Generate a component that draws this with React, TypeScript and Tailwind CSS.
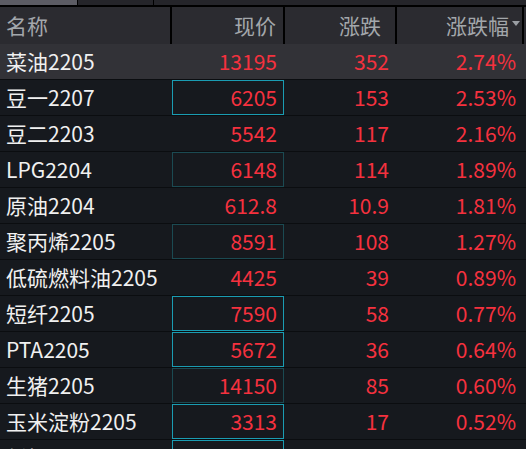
type Row = {
  name: string;
  price: string;
  change: string;
  pct: string;
  box?: "on" | "dim";
};

const ROWS: Row[] = [
  { name: "菜油2205", price: "13195", change: "352", pct: "2.74%" },
  { name: "豆一2207", price: "6205", change: "153", pct: "2.53%", box: "on" },
  { name: "豆二2203", price: "5542", change: "117", pct: "2.16%" },
  { name: "LPG2204", price: "6148", change: "114", pct: "1.89%", box: "dim" },
  { name: "原油2204", price: "612.8", change: "10.9", pct: "1.81%" },
  { name: "聚丙烯2205", price: "8591", change: "108", pct: "1.27%", box: "dim" },
  { name: "低硫燃料油2205", price: "4425", change: "39", pct: "0.89%" },
  { name: "短纤2205", price: "7590", change: "58", pct: "0.77%", box: "on" },
  { name: "PTA2205", price: "5672", change: "36", pct: "0.64%", box: "on" },
  { name: "生猪2205", price: "14150", change: "85", pct: "0.60%", box: "dim" },
  { name: "玉米淀粉2205", price: "3313", change: "17", pct: "0.52%", box: "on" },
  { name: "纤板2205", price: "1200", change: "6", pct: "0.50%", box: "on" },
];

export default function App() {
  return (
    <div className="h-[449px] w-[526px] overflow-hidden bg-[#16191e] font-['Noto_Sans_CJK_SC','Noto_Sans',sans-serif] text-[21px]">
      {/* tab strip */}
      <div className="flex h-[5px] bg-[#25252a]">
        <div className="relative w-[77px] overflow-hidden bg-[#5c5c64]">
          <span className="absolute left-[26px] top-[-18px] text-[14px] leading-none text-white">
            称
          </span>
        </div>
        <div className="w-px bg-black" />
        <div className="w-[75px]" />
        <div className="w-px bg-black" />
      </div>
      <div className="h-[2px] bg-black" />

      {/* header */}
      <div className="flex h-[37px] items-center bg-[#2b2b30] leading-none text-[#a3a7ab]">
        <div className="flex h-full w-[172px] items-center border-r-2 border-black pl-[6px]">
          名称
        </div>
        <div className="flex h-full w-[113px] items-center justify-end border-r-2 border-black pr-[7px]">
          现价
        </div>
        <div className="flex h-full w-[112px] items-center justify-end border-r-2 border-black pr-[14px]">
          涨跌
        </div>
        <div className="flex h-full w-[127px] items-center justify-end border-r-2 border-black pr-[2px]">
          涨跌幅
          <span className="ml-[3px] mb-[4px] h-0 w-0 border-x-[4px] border-t-[5px] border-x-transparent border-t-[#9a9ea3]" />
        </div>
      </div>

      {ROWS.map((r, i) => (
        <div
          key={r.name}
          className={`flex h-[36px] border-b border-[#0b0d10] leading-none ${
            i === 0 ? "bg-[#323237]" : "bg-[#16191e]"
          }`}
        >
          <div className="flex w-[172px] items-center whitespace-nowrap pl-[6px] text-[#f0f0f0]">
            {r.name}
          </div>
          <div
            className={`flex w-[112px] items-center justify-end pr-[6px] text-[#f5313e] ${
              r.box === "on"
                ? "border border-[#1a9cb2]"
                : r.box === "dim"
                  ? "border border-[#1b4a52]"
                  : "border border-transparent"
            }`}
          >
            {r.price}
          </div>
          <div className="flex w-[113px] items-center justify-end pr-[8px] text-[#f5313e]">
            {r.change}
          </div>
          <div className="flex w-[127px] items-center justify-end pr-[8px] text-[#f5313e]">
            {r.pct}
          </div>
        </div>
      ))}
    </div>
  );
}
